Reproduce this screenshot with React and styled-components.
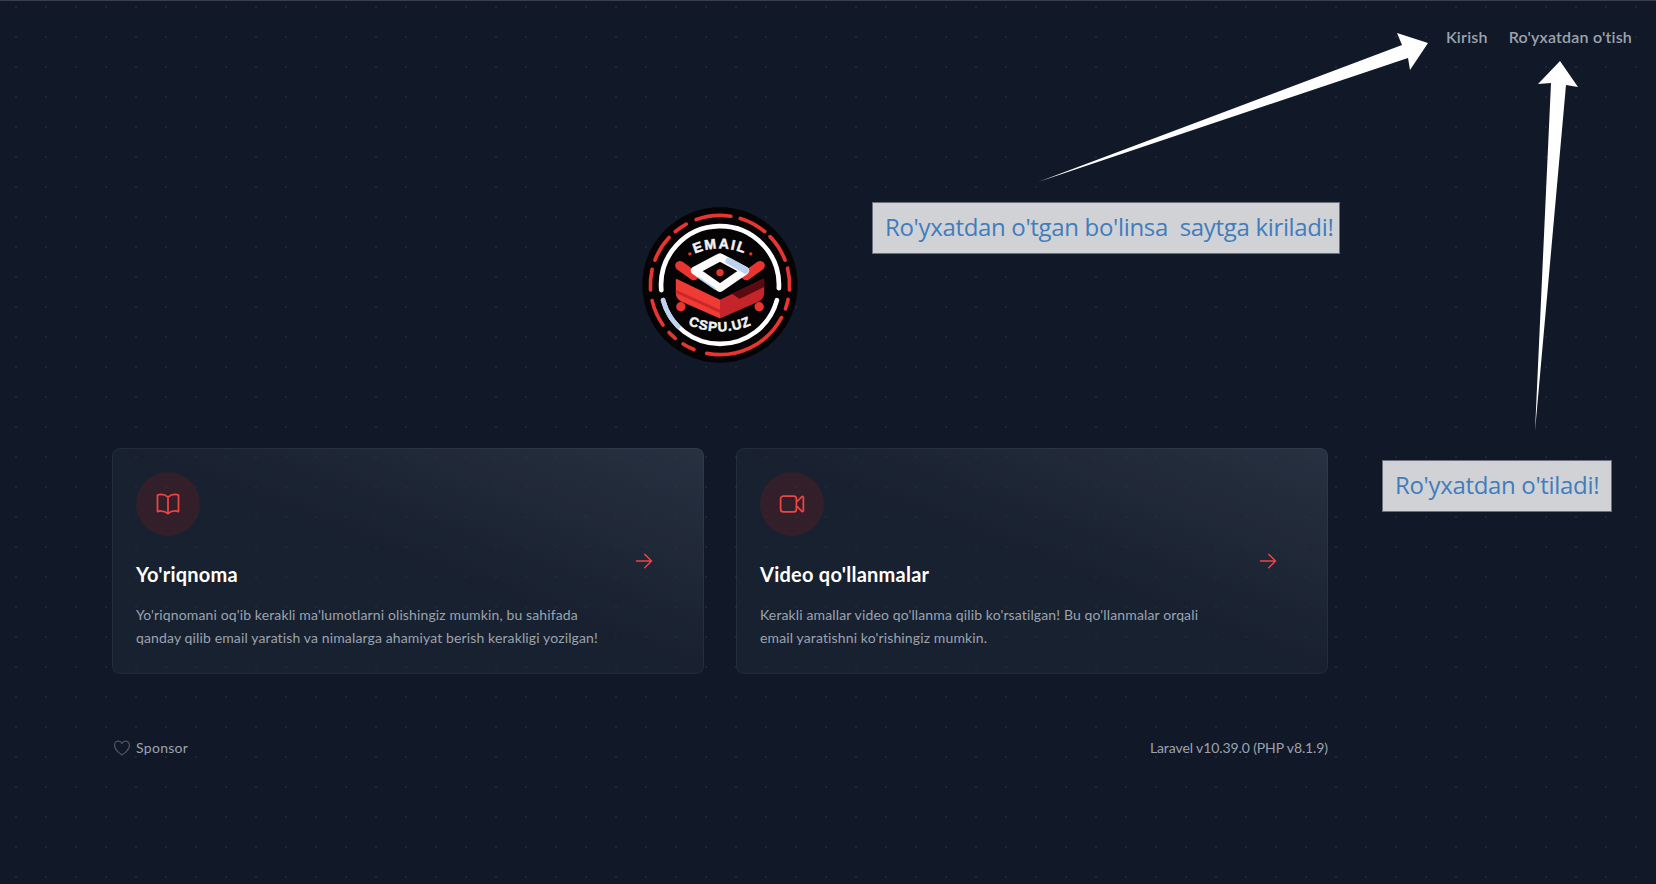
import React from 'react';
import styled, { createGlobalStyle } from 'styled-components';

const GlobalStyle = createGlobalStyle`
  html, body {
    margin: 0;
    padding: 0;
    background: #111827;
  }
  * {
    box-sizing: border-box;
  }
`;

const uiFont = `Lato, "Noto Sans", Arial, sans-serif`;

const Page = styled.div`
  position: relative;
  width: 100%;
  min-height: 884px;
  overflow: hidden;
  border-top: 1px solid #3a3e4a;
  background-color: #111827;
  background-image: radial-gradient(circle at 16px 6px, rgba(255, 255, 255, 0.09) 0, rgba(255, 255, 255, 0.05) 1px, transparent 1.6px);
  background-size: 30px 30px;
  font-family: ${uiFont};
`;

const Nav = styled.nav`
  display: flex;
  justify-content: flex-end;
  gap: 21px;
  padding: 26px 24px 0;
  height: 206px;
`;

const NavLink = styled.a`
  font-size: 16px;
  line-height: 20px;
  font-weight: 600;
  letter-spacing: 0.2px;
  color: #9ca3af;
`;

const Main = styled.main`
  width: 1216px;
  margin-left: 112px;
`;

const LogoRow = styled.div`
  display: flex;
  justify-content: center;
  margin-bottom: 85px;
`;

const Cards = styled.div`
  display: grid;
  grid-template-columns: 592px 592px;
  gap: 32px;
`;

const Card = styled.a`
  display: flex;
  padding: 24px;
  border-radius: 8px;
  background-color: rgba(31, 41, 55, 0.5);
  background-image: linear-gradient(to bottom left, rgba(55, 65, 81, 0.5), rgba(55, 65, 81, 0) 50%);
  box-shadow: inset 0 0 0 1px rgba(255, 255, 255, 0.05);
`;

const CardBody = styled.div`
  flex: 1;
`;

const IconCircle = styled.div`
  display: flex;
  align-items: center;
  justify-content: center;
  width: 64px;
  height: 64px;
  border-radius: 50%;
  background: rgba(153, 27, 27, 0.2);
  svg {
    width: 28px;
    height: 28px;
  }
`;

const CardTitle = styled.h2`
  margin: 24px 0 0;
  font-size: 20px;
  line-height: 28px;
  font-weight: 700;
  letter-spacing: 0.25px;
  color: #fff;
`;

const CardText = styled.p`
  margin: 16px 0 0;
  font-size: 14px;
  line-height: 22.75px;
  letter-spacing: 0.13px;
  color: #9ca3af;
`;

const ArrowIcon = styled.svg`
  align-self: center;
  flex-shrink: 0;
  width: 24px;
  height: 24px;
  margin: 0 24px;
`;

const Footer = styled.footer`
  display: flex;
  justify-content: space-between;
  align-items: center;
  margin-top: 64px;
  font-size: 14px;
  line-height: 20px;
  color: #9ca3af;
`;

const Sponsor = styled.div`
  display: flex;
  align-items: center;
  gap: 4px;
  letter-spacing: 0.3px;
  svg {
    width: 20px;
    height: 20px;
  }
`;

const Version = styled.div`
  letter-spacing: -0.1px;
`;

const Note = styled.div`
  position: absolute;
  left: ${p => p.$left}px;
  top: ${p => p.$top}px;
  width: ${p => p.$width}px;
  height: 52px;
  padding-left: 12px;
  border: 1px solid #6b7080;
  background: #d1d2d6;
  color: #3f7dbd;
  font-family: "Open Sans", sans-serif;
  font-size: 24px;
  letter-spacing: -0.33px;
  line-height: 48px;
  white-space: pre;
`;

const Overlay = styled.svg`
  position: absolute;
  left: 0;
  top: -1px;
  pointer-events: none;
`;

const OutlineIcon = ({ d, stroke = '#ef4444' }) => (
  <svg viewBox="0 0 24 24" fill="none" stroke={stroke} strokeWidth="1.5" strokeLinecap="round" strokeLinejoin="round">
    <path d={d} />
  </svg>
);

const bookPath = 'M12 6.042A8.967 8.967 0 006 3.75c-1.052 0-2.062.18-3 .512v14.25A8.987 8.987 0 016 18c2.305 0 4.408.867 6 2.292m0-14.25a8.966 8.966 0 016-2.292c1.052 0 2.062.18 3 .512v14.25A8.987 8.987 0 0018 18a8.967 8.967 0 00-6 2.292m0-14.25v14.25';
const videoPath = 'M15.75 10.5l4.72-4.72a.75.75 0 011.28.53v11.38a.75.75 0 01-1.28.53l-4.72-4.72M4.5 18.75h9a2.25 2.25 0 002.25-2.25v-9a2.25 2.25 0 00-2.25-2.25h-9A2.25 2.25 0 002.25 7.5v9a2.25 2.25 0 002.25 2.25z';
const heartPath = 'M21 8.25c0-2.485-2.099-4.5-4.688-4.5-1.935 0-3.597 1.126-4.312 2.733-.715-1.607-2.377-2.733-4.313-2.733C5.1 3.75 3 5.765 3 8.25c0 7.22 9 12 9 12s9-4.78 9-12z';

// point on the logo circle, 0deg is straight up, clockwise
const polar = (r, deg) => {
  const a = (deg - 90) * Math.PI / 180;
  return [r * Math.cos(a), r * Math.sin(a)];
};

const arc = (r, from, to) => {
  const [x1, y1] = polar(r, from);
  const [x2, y2] = polar(r, to);
  const large = to - from > 180 ? 1 : 0;
  return `M${x1.toFixed(1)} ${y1.toFixed(1)}A${r} ${r} 0 ${large} 1 ${x2.toFixed(1)} ${y2.toFixed(1)}`;
};

const dashes = [
  [-20, 9], [17, 40], [46, 69], [76, 94], [102, 110], [118, 191],
  [202, 212], [220, 227], [235, 257], [266, 283], [291, 313], [320, 331],
];

const logoFont = '"Liberation Sans", sans-serif';

const Logo = () => (
  <svg width="156" height="156" viewBox="-233 -233 466 466">
    <defs>
      <path id="emailCurve" d="M-110 -73A185 185 0 0 1 110 -73" />
      <path id="cspuCurve" d="M-110 110.5A228 228 0 0 0 110 110.5" />
    </defs>
    <circle r="232" fill="#050304" />
    {dashes.map(([a, b]) => (
      <path key={a} d={arc(208, a, b)} fill="none" stroke="#e8352f" strokeWidth="11" strokeLinecap="round" />
    ))}
    <path d={arc(176, -95, 93)} fill="none" stroke="#fff" strokeWidth="14" strokeLinecap="round" />
    <path d={arc(176, 105, 255)} fill="none" stroke="#fff" strokeWidth="14" strokeLinecap="round" />
    <path d={arc(176, 225, 255)} fill="none" stroke="#bcd2f0" strokeWidth="14" strokeLinecap="round" />
    <text fontFamily={logoFont} fontWeight="700" fontSize="42" fill="#f2f2f2" stroke="#f2f2f2" strokeWidth="1.5" letterSpacing="5">
      <textPath href="#emailCurve" startOffset="50%" textAnchor="middle">EMAIL</textPath>
    </text>
    <circle cx="-90" cy="-93" r="5" fill="#e8352f" />
    <circle cx="92" cy="-93" r="5" fill="#e8352f" />
    <path d="M-120 -58L-78 -28" stroke="#e8352f" strokeWidth="28" strokeLinecap="round" />
    <path d="M120 -58L78 -28" stroke="#e8352f" strokeWidth="28" strokeLinecap="round" />
    {/* stacked red layers under the diamond */}
    <path d="M-132 -14Q-132 -20 -124 -16L0 44L0 100L-114 50Q-132 42 -132 24Z" fill="#ef3b33" />
    <path d="M132 -14Q132 -20 124 -16L0 44L0 100L114 50Q132 42 132 24Z" fill="#c4242a" />
    <path d="M-132 14L0 74L0 84L-132 24Z" fill="#c9282b" />
    <path d="M132 -14Q132 -20 124 -16L36 26L58 42L132 6Z" fill="#5b0a12" />
    <path d="M0 -83L75 -43L0 9L-75 -43Z" fill="#0a0405" stroke="#fff" strokeWidth="24" strokeLinejoin="round" />
    <path d="M26 -72L76 -44" fill="none" stroke="#bcd2f0" strokeWidth="20" strokeLinecap="round" />
    <path d="M-64 -22L-14 12" fill="none" stroke="#bcd2f0" strokeWidth="5" strokeLinecap="round" />
    <circle cx="0" cy="-37" r="11" fill="#e8352f" />
    <circle cx="-117" cy="65" r="14" fill="#e8352f" />
    <circle cx="117" cy="65" r="14" fill="#e8352f" />
    <text fontFamily={logoFont} fontWeight="700" fontSize="40" fill="#f2f2f2" stroke="#f2f2f2" strokeWidth="1.5" letterSpacing="3">
      <textPath href="#cspuCurve" startOffset="50%" textAnchor="middle">CSPU.UZ</textPath>
    </text>
  </svg>
);

const Arrow = () => (
  <ArrowIcon viewBox="0 0 24 24" fill="none" stroke="#ef4444" strokeWidth="1.5" strokeLinecap="round" strokeLinejoin="round">
    <path d="M4.5 12h15m0 0l-6.75-6.75M19.5 12l-6.75 6.75" />
  </ArrowIcon>
);

const App = () => (
  <Page>
    <GlobalStyle />
    <Nav>
      <NavLink>Kirish</NavLink>
      <NavLink>Ro'yxatdan o'tish</NavLink>
    </Nav>
    <Main>
      <LogoRow>
        <Logo />
      </LogoRow>
      <Cards>
        <Card>
          <CardBody>
            <IconCircle><OutlineIcon d={bookPath} /></IconCircle>
            <CardTitle>Yo'riqnoma</CardTitle>
            <CardText>
              Yo'riqnomani oq'ib kerakli ma'lumotlarni olishingiz mumkin, bu sahifada<br />
              qanday qilib email yaratish va nimalarga ahamiyat berish kerakligi yozilgan!
            </CardText>
          </CardBody>
          <Arrow />
        </Card>
        <Card>
          <CardBody>
            <IconCircle><OutlineIcon d={videoPath} /></IconCircle>
            <CardTitle>Video qo'llanmalar</CardTitle>
            <CardText>
              Kerakli amallar video qo'llanma qilib ko'rsatilgan! Bu qo'llanmalar orqali<br />
              email yaratishni ko'rishingiz mumkin.
            </CardText>
          </CardBody>
          <Arrow />
        </Card>
      </Cards>
      <Footer>
        <Sponsor><OutlineIcon d={heartPath} stroke="#4b5563" />Sponsor</Sponsor>
        <Version>Laravel v10.39.0 (PHP v8.1.9)</Version>
      </Footer>
    </Main>
    <Overlay width="1656" height="884" viewBox="0 0 1656 884">
      <polygon points="1038,182 1402,45 1397,33 1428,43 1410,70 1408,58" fill="#fff" />
      <polygon points="1535,431 1551,83 1538,84 1560,61 1578,87 1566,85" fill="#fff" />
    </Overlay>
    <Note $left={872} $top={201} $width={468}>Ro'yxatdan o'tgan bo'linsa  saytga kiriladi!</Note>
    <Note $left={1382} $top={459} $width={230}>Ro'yxatdan o'tiladi!</Note>
  </Page>
);

export default App;
